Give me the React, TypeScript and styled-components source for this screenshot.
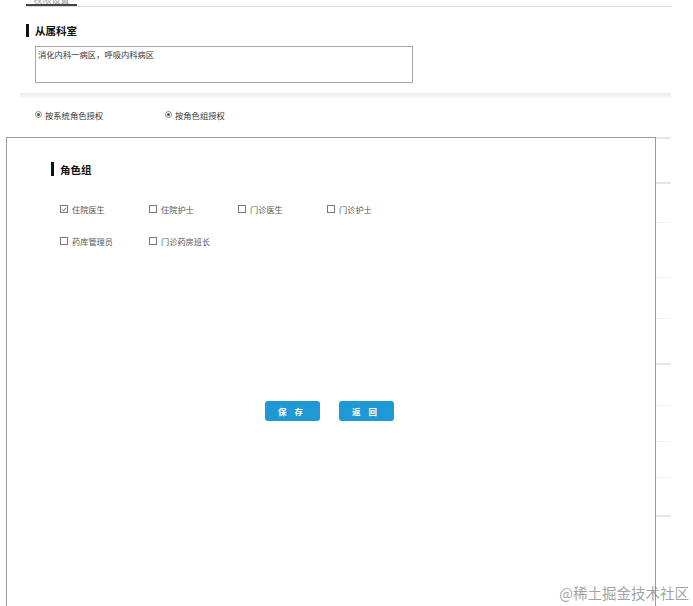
import React from "react";
import styled, { createGlobalStyle } from "styled-components";

const GlobalStyle = createGlobalStyle`
  html, body {
    margin: 0;
    padding: 0;
    background: #ffffff;
    overflow: hidden;
  }
  body {
    font-family: "Noto Sans CJK SC", "Liberation Sans", sans-serif;
    color: #333;
  }
  * {
    box-sizing: border-box;
  }
`;

const tableRows = [
  { h: 45, strong: true },
  { h: 40, strong: true },
  { h: 55, strong: false },
  { h: 41, strong: false },
  { h: 45, strong: false },
  { h: 42, strong: true },
  { h: 36, strong: false },
  { h: 36, strong: false },
  { h: 38, strong: false },
  { h: 60, strong: true },
];

const roles = [
  { name: "住院医生", checked: true },
  { name: "住院护士", checked: false },
  { name: "门诊医生", checked: false },
  { name: "门诊护士", checked: false },
  { name: "药库管理员", checked: false },
  { name: "门诊药房班长", checked: false },
];

const App = () => {
  return (
    <>
      <GlobalStyle />
      <Page>
        <Content>
          <TabBar>
            <Tab>权限设置</Tab>
          </TabBar>

          <Section>
            <SectionTitle>从属科室</SectionTitle>
            <DeptBox>消化内科一病区，呼吸内科病区</DeptBox>
          </Section>

          <Divider />

          <RadioRow>
            <RadioItem $width={130}>
              <Radio />
              按系统角色授权
            </RadioItem>
            <RadioItem>
              <Radio />
              按角色组授权
            </RadioItem>
          </RadioRow>

          <Table>
            {tableRows.map((row, i) => (
              <TableRow key={i} $h={row.h} $strong={row.strong} />
            ))}
          </Table>
        </Content>

        <Dialog>
          <DialogTitle>角色组</DialogTitle>
          <RoleGrid>
            {roles.map((role) => (
              <RoleItem key={role.name}>
                <CheckBox>
                  {role.checked && (
                    <svg width="7" height="7" viewBox="0 0 7 7">
                      <path
                        d="M1.2 3.6 L2.9 5.2 L5.9 1.4"
                        fill="none"
                        stroke="#555"
                        strokeWidth="1"
                      />
                    </svg>
                  )}
                </CheckBox>
                {role.name}
              </RoleItem>
            ))}
          </RoleGrid>
          <ButtonRow>
            <ActionButton>保 存</ActionButton>
            <ActionButton>返 回</ActionButton>
          </ButtonRow>
        </Dialog>

        <Watermark>@稀土掘金技术社区</Watermark>
      </Page>
    </>
  );
};

export default App;

const Page = styled.div`
  position: relative;
  width: 693px;
  height: 606px;
  overflow: hidden;
  background: #ffffff;
`;

const Content = styled.div`
  width: 671px;
  padding-left: 20px;
  display: flex;
  flex-direction: column;
`;

const TabBar = styled.div`
  height: 7px;
  margin-left: 5px;
  border-bottom: 1px solid #dcdcdc;
  display: flex;
  overflow: hidden;
`;

const Tab = styled.div`
  width: 51px;
  height: 6px;
  margin-left: 1px;
  border-bottom: 2px solid #444;
  font-size: 9px;
  line-height: 0px;
  color: #999;
  text-align: center;
  overflow: hidden;
`;

const Section = styled.div`
  display: flex;
  flex-direction: column;
  padding-top: 17px;
`;

const SectionTitle = styled.h2`
  margin: 0 0 0 6px;
  height: 13px;
  display: flex;
  align-items: center;
  gap: 6px;
  font-size: 10.5px;
  font-weight: bold;
  color: #111;

  &::before {
    content: "";
    width: 3px;
    height: 13px;
    background: #111;
  }
`;

const DeptBox = styled.div`
  margin: 9px 0 0 15px;
  width: 378px;
  height: 37px;
  border: 1px solid #a8a8a8;
  padding: 2px 2px;
  font-size: 8.3px;
  line-height: 11px;
  color: #333;
`;

const Divider = styled.div`
  margin-top: 10px;
  height: 5px;
  background: linear-gradient(#ececec, #f8f8f8);
`;

const RadioRow = styled.div`
  display: flex;
  align-items: center;
  height: 33px;
  padding-left: 15px;
`;

const RadioItem = styled.label<{ $width?: number }>`
  display: flex;
  align-items: center;
  gap: 3px;
  width: ${(p) => (p.$width ? `${p.$width}px` : "auto")};
  font-size: 8.3px;
  color: #333;
`;

const Radio = styled.span`
  width: 7px;
  height: 7px;
  border: 1px solid #888;
  border-radius: 50%;
  display: flex;
  align-items: center;
  justify-content: center;

  &::after {
    content: "";
    width: 3px;
    height: 3px;
    border-radius: 50%;
    background: #555;
  }
`;

const Table = styled.div`
  margin-top: 6px;
  display: flex;
  flex-direction: column;
`;

const TableRow = styled.div<{ $h: number; $strong: boolean }>`
  height: ${(p) => p.$h}px;
  border-top: ${(p) => (p.$strong ? "2px solid #e6e6e6" : "1px solid #f1f1f1")};
`;

const Dialog = styled.div`
  position: absolute;
  left: 6px;
  top: 137px;
  width: 650px;
  height: 500px;
  background: #ffffff;
  border: 1px solid #9c9c9c;
  padding: 24px 0 0 44px;
  display: flex;
  flex-direction: column;
`;

const DialogTitle = styled.h3`
  margin: 0;
  height: 14px;
  display: flex;
  align-items: center;
  gap: 6px;
  font-size: 10.5px;
  font-weight: bold;
  color: #111;

  &::before {
    content: "";
    width: 3px;
    height: 14px;
    background: #111;
  }
`;

const RoleGrid = styled.div`
  margin: 26px 0 0 9px;
  display: grid;
  grid-template-columns: repeat(4, 89px);
  grid-auto-rows: 32px;
`;

const RoleItem = styled.label`
  display: flex;
  align-items: center;
  gap: 4px;
  height: 14px;
  font-size: 8.2px;
  color: #555;
`;

const CheckBox = styled.span`
  width: 8px;
  height: 8px;
  border: 1px solid #777;
  display: flex;
  align-items: center;
  justify-content: center;
  background: #fff;
`;

const ButtonRow = styled.div`
  margin: 135px 0 0 -48px;
  display: flex;
  justify-content: center;
  gap: 19px;
`;

const ActionButton = styled.button`
  width: 55px;
  height: 20px;
  border: none;
  border-radius: 3px;
  background: #1e99d6;
  color: #ffffff;
  font-family: "Noto Sans CJK SC", sans-serif;
  font-size: 8.5px;
  font-weight: bold;
  letter-spacing: 3px;
  padding: 0;
  cursor: pointer;
`;

const Watermark = styled.div`
  position: absolute;
  right: 4px;
  bottom: 3px;
  font-family: "Noto Sans CJK SC", serif;
  font-size: 14.5px;
  color: rgba(120, 120, 120, 0.7);
  pointer-events: none;
`;
